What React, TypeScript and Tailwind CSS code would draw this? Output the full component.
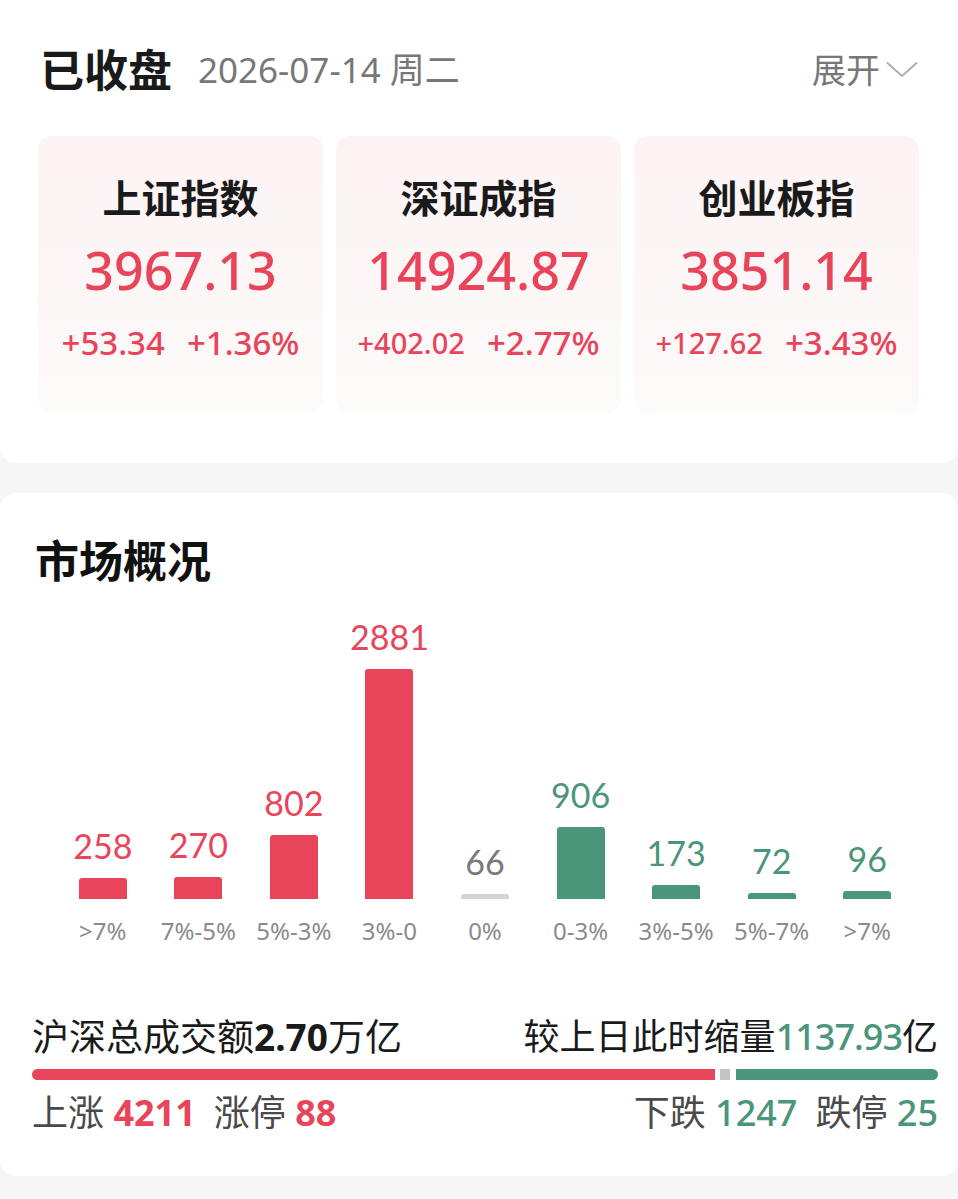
const RED = "text-[#e8445a]";
const GREEN = "text-[#4b957a]";

const indices = [
  { name: "上证指数", value: "3967.13", change: "+53.34", pct: "+1.36%" },
  { name: "深证成指", value: "14924.87", change: "+402.02", pct: "+2.77%" },
  { name: "创业板指", value: "3851.14", change: "+127.62", pct: "+3.43%" },
];

type Tone = "up" | "flat" | "down";

const buckets: { label: string; count: number; tone: Tone }[] = [
  { label: ">7%", count: 258, tone: "up" },
  { label: "7%-5%", count: 270, tone: "up" },
  { label: "5%-3%", count: 802, tone: "up" },
  { label: "3%-0", count: 2881, tone: "up" },
  { label: "0%", count: 66, tone: "flat" },
  { label: "0-3%", count: 906, tone: "down" },
  { label: "3%-5%", count: 173, tone: "down" },
  { label: "5%-7%", count: 72, tone: "down" },
  { label: ">7%", count: 96, tone: "down" },
];

const barColor: Record<Tone, string> = {
  up: "bg-[#e8445a]",
  flat: "bg-[#d4d4d4]",
  down: "bg-[#4b957a]",
};

const numColor: Record<Tone, string> = {
  up: "text-[#e8445a]",
  flat: "text-[#7a7a7a]",
  down: "text-[#4b957a]",
};

function IndexCard({ item }: { item: (typeof indices)[number] }) {
  // longer change figures are set a size down so the row keeps its width
  const changeSize = item.change.length > 6 ? "text-[29px]" : "text-[33px]";
  return (
    <div className="h-[277px] rounded-[14px] bg-gradient-to-b from-[#fcf3f4] to-[#fdfafa] flex flex-col items-center pt-[40px]">
      <div className="text-[39px] leading-[44px] font-bold text-[#1a1a1a]">{item.name}</div>
      <div className={`mt-[22px] text-[52px] leading-[56px] font-medium ${RED}`}>{item.value}</div>
      <div className={`mt-[27px] h-[36px] flex items-center gap-[22px] font-medium ${RED}`}>
        <span className={changeSize}>{item.change}</span>
        <span className="text-[33px]">{item.pct}</span>
      </div>
    </div>
  );
}

export default function App() {
  const up = 4211;
  const down = 1247;

  return (
    <div
      className="min-h-screen bg-[#f6f6f6]"
      style={{ fontFamily: '"Noto Sans", "Noto Sans CJK SC", sans-serif' }}
    >
      {/* Closing summary */}
      <section className="bg-white rounded-b-2xl pb-[50px]">
        <div className="h-[136px] flex items-center pl-[40px] pr-[40px] pt-[4px]">
          <span className="text-[44px] font-bold text-[#1a1a1a]">已收盘</span>
          <span className="ml-[26px] text-[35px] text-[#777777]">2026-07-14 周二</span>
          <div className="ml-auto flex items-center text-[34px] text-[#777777]">
            <span>展开</span>
            <svg viewBox="0 0 32 18" className="ml-[6px] w-[32px] h-[18px]" fill="none">
              <path d="M1.5 2 L16 15 L30.5 2" stroke="#b0b0b0" strokeWidth="2" strokeLinecap="round" strokeLinejoin="round" />
            </svg>
          </div>
        </div>
        <div className="grid grid-cols-3 gap-[13px] pl-[38px] pr-[39px]">
          {indices.map((item) => (
            <IndexCard key={item.name} item={item} />
          ))}
        </div>
      </section>

      {/* Market overview */}
      <section className="mt-[30px] bg-white rounded-2xl pt-[46px] pb-[41px]">
        <h2 className="pl-[35px] text-[44px] leading-[44px] font-bold text-[#111111]">市场概况</h2>

        <div className="pl-[55px] pr-[43px]">
          <div className="h-[316px] grid grid-cols-9 items-end">
            {buckets.map((b, i) => (
              <div key={i} className="flex flex-col items-center">
                <span
                  className={`text-[34px] leading-[40px] mb-[12px] ${numColor[b.tone]}`}
                  style={{ fontFamily: "Lato, sans-serif" }}
                >
                  {b.count}
                </span>
                <div
                  className={`w-[48px] rounded-t-[3px] ${barColor[b.tone]}`}
                  style={{ height: Math.max(5, Math.round(b.count * 0.08)) }}
                />
              </div>
            ))}
          </div>
          <div className="mt-[18px] grid grid-cols-9">
            {buckets.map((b, i) => (
              <span key={i} className="text-center text-[24px] leading-[28px] text-[#8a8a8a]">
                {b.label}
              </span>
            ))}
          </div>
        </div>

        <div className="mt-[70px] pl-[32px] pr-[20px]">
          <div className="flex justify-between leading-[44px] text-[#1a1a1a]">
            <span className="text-[37px]">
              沪深总成交额<span className="font-bold">2.70</span>万亿
            </span>
            <span className="text-[36px]">
              较上日此时缩量<span className={`font-medium tracking-[-1px] ${GREEN}`}>1137.93</span>亿
            </span>
          </div>

          <div className="mt-[10px] h-[11px] flex items-stretch">
            <div className="bg-[#e8445a] rounded-l-full" style={{ flexGrow: up }} />
            <div className="ml-[5px] mr-[6px] w-[10px] shrink-0 bg-[#c4c4c4]" />
            <div className="bg-[#4b957a] rounded-r-full" style={{ flexGrow: down }} />
          </div>

          <div className="mt-[11px] flex justify-between text-[36px] leading-[44px] text-[#4a4a4a]">
            <span>
              上涨 <span className={`font-bold ${RED}`}>4211</span>
              <span className="ml-[18px]">涨停 </span>
              <span className={`font-bold ${RED}`}>88</span>
            </span>
            <span>
              下跌 <span className={`font-medium ${GREEN}`}>1247</span>
              <span className="ml-[18px]">跌停 </span>
              <span className={`font-medium ${GREEN}`}>25</span>
            </span>
          </div>
        </div>
      </section>
    </div>
  );
}
